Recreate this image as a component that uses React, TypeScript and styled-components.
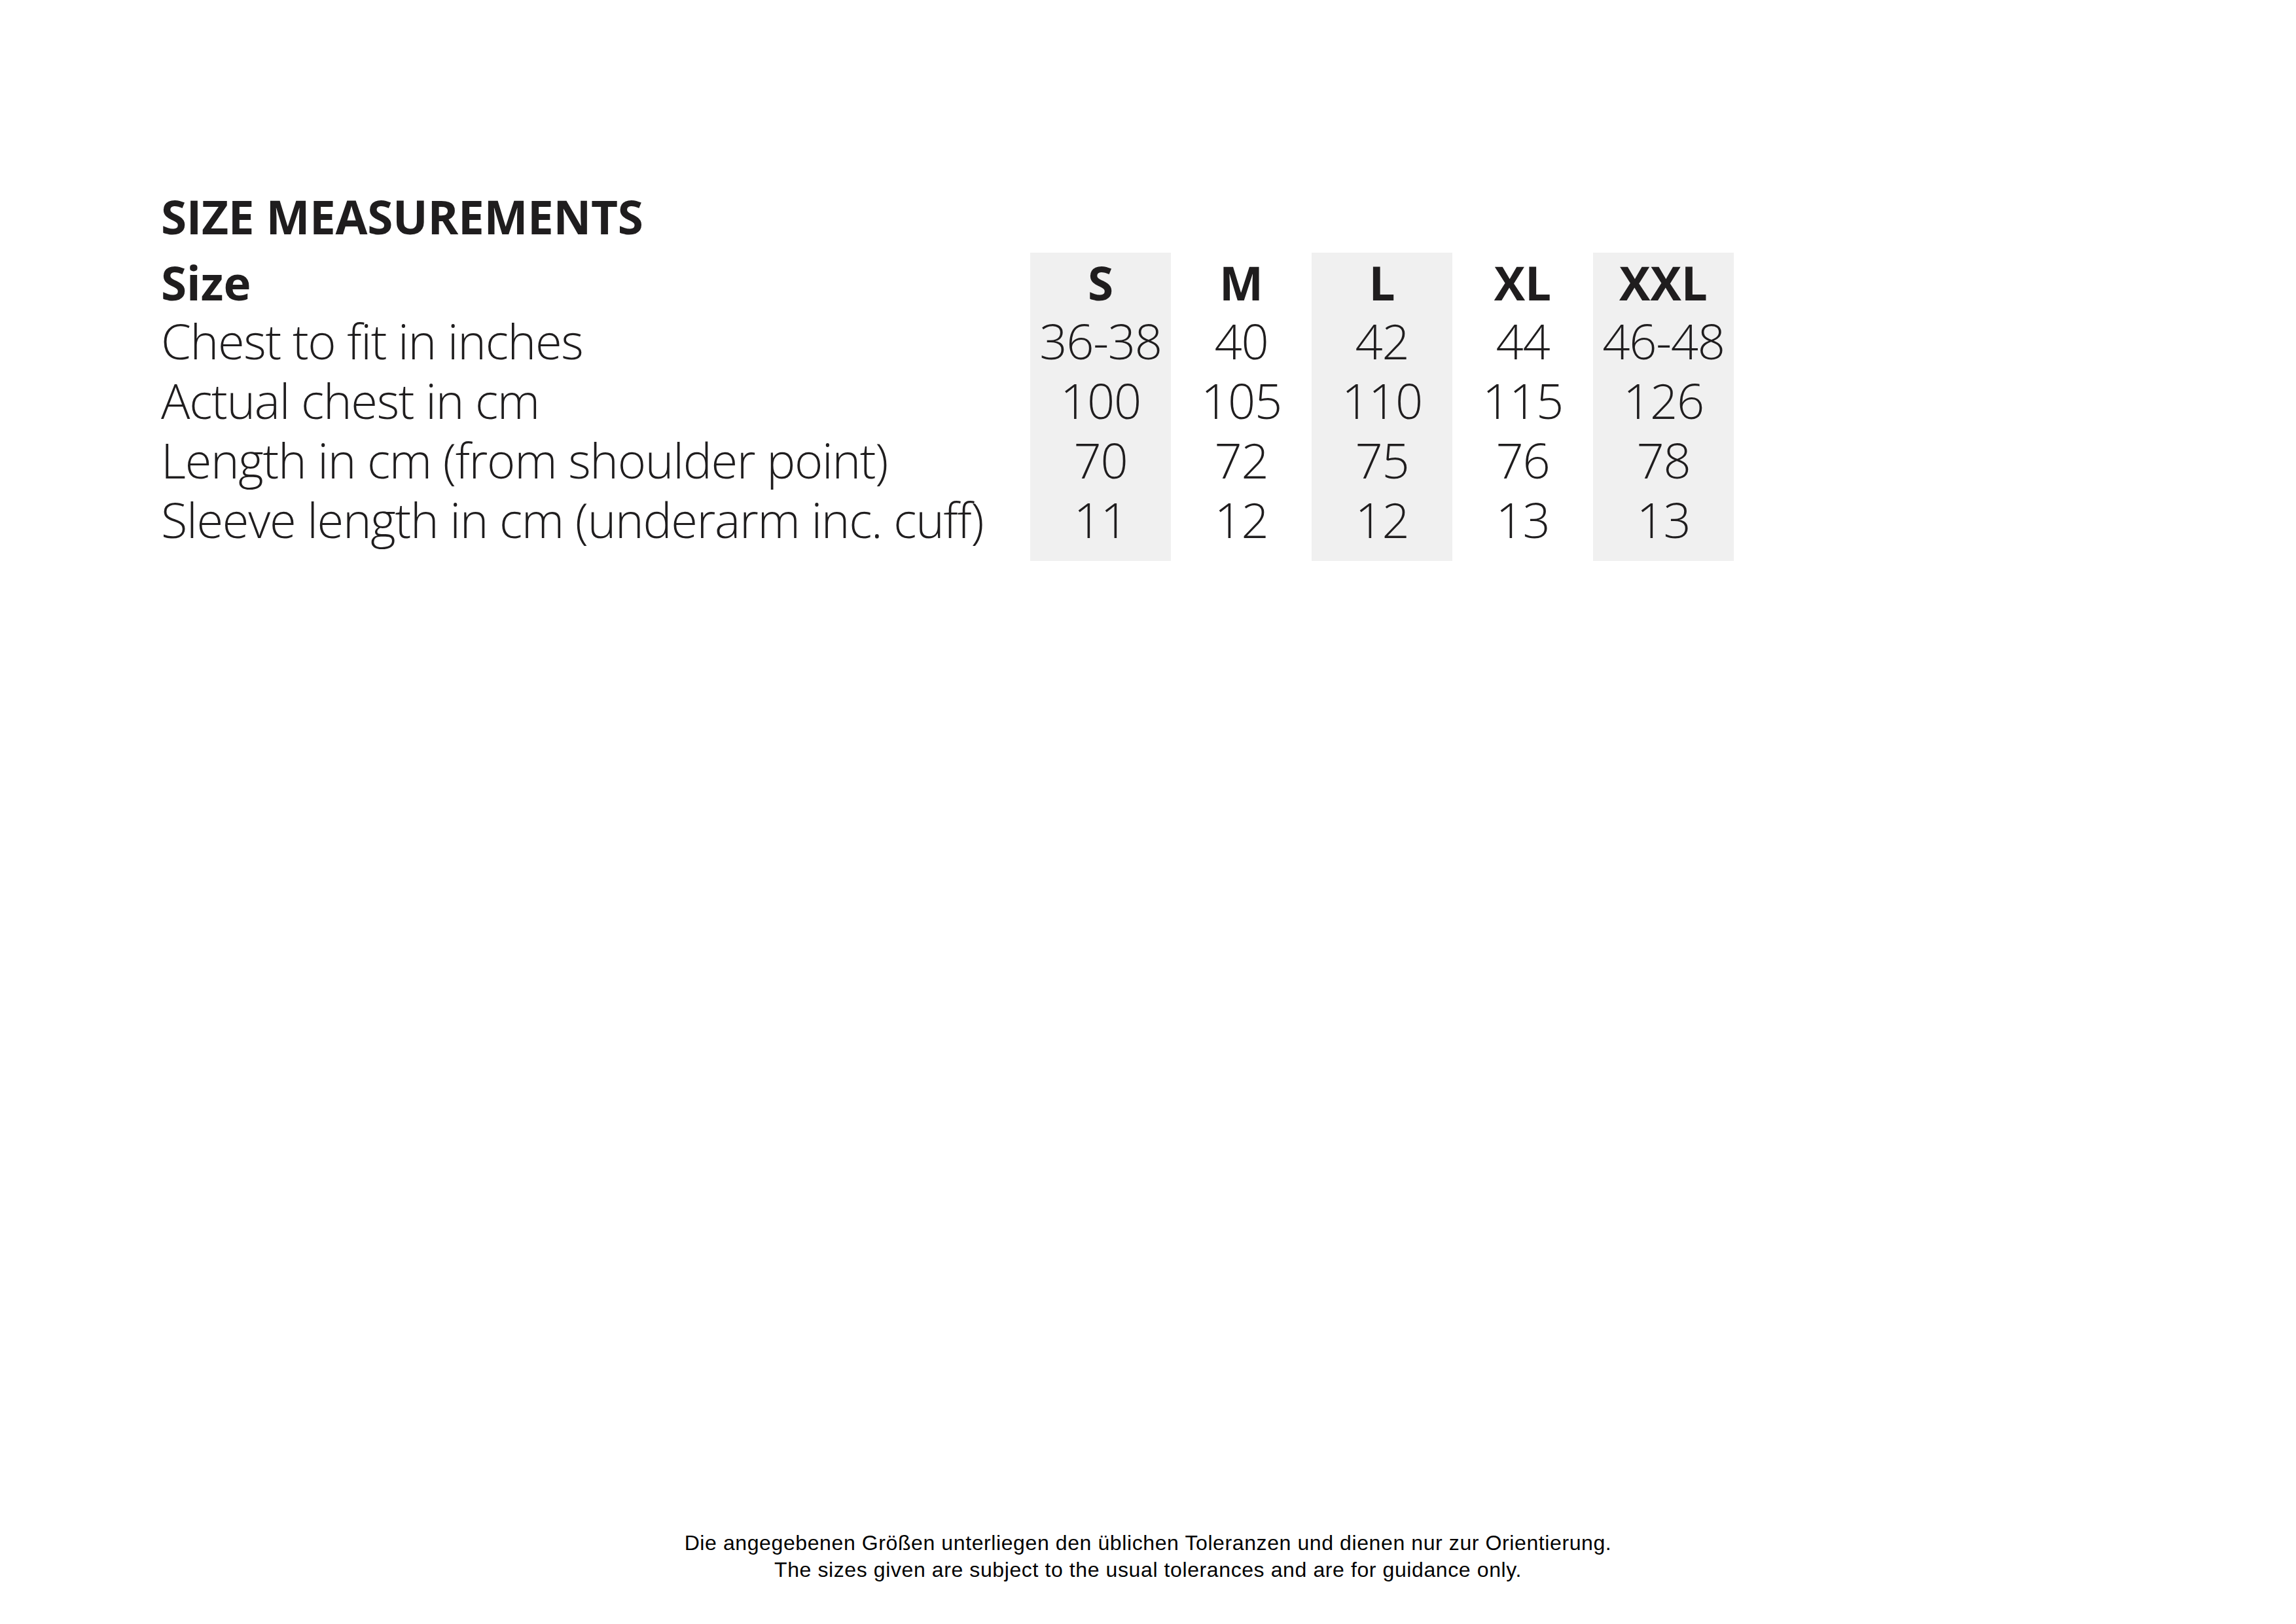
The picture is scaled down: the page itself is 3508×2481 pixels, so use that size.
import React from 'react';
import styled, { createGlobalStyle } from 'styled-components';

const GlobalStyle = createGlobalStyle`
    html, body {
        margin: 0;
        padding: 0;
        background: #ffffff;
    }
`;

const Page = styled.div`
    width: 3508px;
    height: 2481px;
    box-sizing: border-box;
    display: flex;
    flex-direction: column;
    padding: 285px 0 62px 246px;
    color: #1f1d1e;
    font-family: "Open Sans", "Noto Sans", sans-serif;
`;

const Title = styled.h1`
    margin: 0 0 10px 0;
    font-size: 71px;
    line-height: 91px;
    font-weight: 700;
    letter-spacing: -0.3px;
`;

const Table = styled.div`
    display: flex;
    align-items: flex-start;
`;

const LabelColumn = styled.div`
    width: 1328px;
    display: flex;
    flex-direction: column;
`;

const SizeColumn = styled.div<{ $shaded: boolean }>`
    width: 215px;
    display: flex;
    flex-direction: column;
    align-items: center;
    padding-bottom: 18px;
    background: ${p => (p.$shaded ? '#f0f0f0' : 'transparent')};
`;

const HeadCell = styled.div`
    height: 89px;
    line-height: 89px;
    padding-top: 0;
    font-size: 71px;
    font-weight: 700;
    white-space: nowrap;
    position: relative;
    top: 1px;
`;

const Cell = styled.div`
    height: 91px;
    line-height: 91px;
    font-size: 74px;
    font-weight: 300;
    letter-spacing: -1.3px;
    white-space: nowrap;
`;

const Footer = styled.div`
    margin-top: auto;
    margin-left: -246px;
    text-align: center;
    font-family: "Liberation Sans", Arial, sans-serif;
    font-size: 32px;
    line-height: 41px;
    letter-spacing: 0.6px;
    color: #000000;
`;

const rows = [
    'Chest to fit in inches',
    'Actual chest in cm',
    'Length in cm (from shoulder point)',
    'Sleeve length in cm (underarm inc. cuff)',
];

const sizes = [
    { name: 'S', values: ['36-38', '100', '70', '11'] },
    { name: 'M', values: ['40', '105', '72', '12'] },
    { name: 'L', values: ['42', '110', '75', '12'] },
    { name: 'XL', values: ['44', '115', '76', '13'] },
    { name: 'XXL', values: ['46-48', '126', '78', '13'] },
];

export default function App() {
    return (
        <>
            <GlobalStyle />
            <Page>
                <Title>SIZE MEASUREMENTS</Title>
                <Table>
                    <LabelColumn>
                        <HeadCell>Size</HeadCell>
                        {rows.map(r => (
                            <Cell key={r}>{r}</Cell>
                        ))}
                    </LabelColumn>
                    {sizes.map((s, i) => (
                        <SizeColumn key={s.name} $shaded={i % 2 === 0}>
                            <HeadCell>{s.name}</HeadCell>
                            {s.values.map((v, j) => (
                                <Cell key={j}>{v}</Cell>
                            ))}
                        </SizeColumn>
                    ))}
                </Table>
                <Footer>
                    <div>Die angegebenen Größen unterliegen den üblichen Toleranzen und dienen nur zur Orientierung.</div>
                    <div>The sizes given are subject to the usual tolerances and are for guidance only.</div>
                </Footer>
            </Page>
        </>
    );
}
